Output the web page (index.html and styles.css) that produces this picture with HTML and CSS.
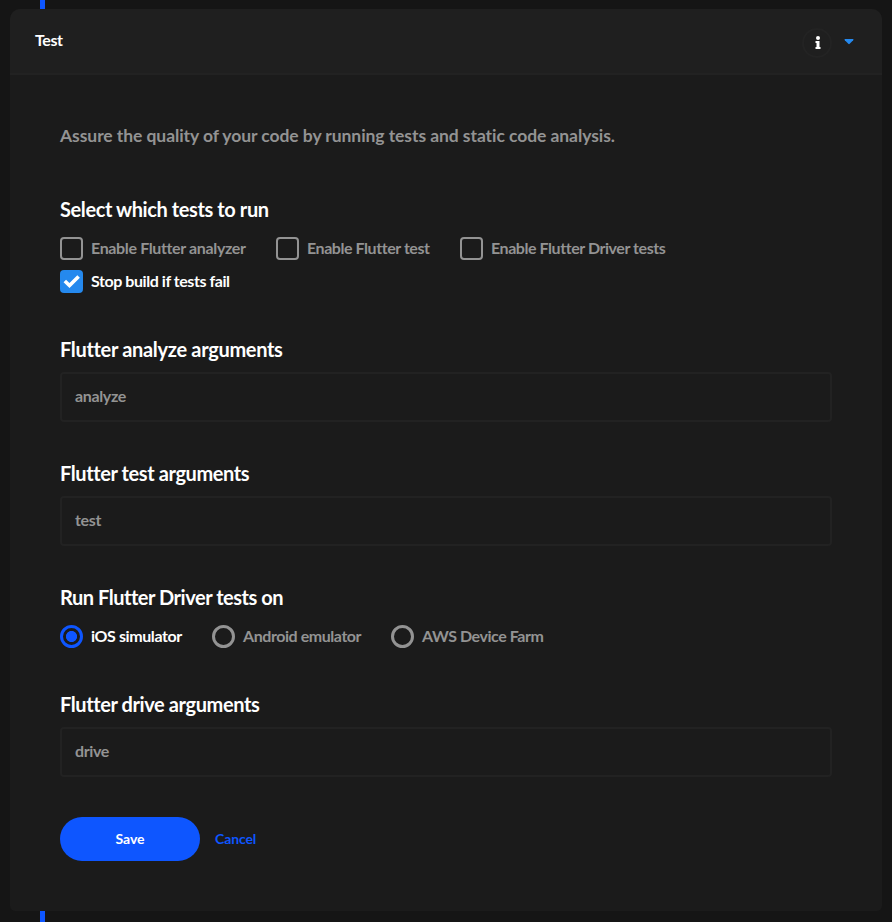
FILE: index.html
```html
<!DOCTYPE html>
<html lang="en">
<head>
<meta charset="utf-8">
<title>Test</title>
<link rel="stylesheet" href="styles.css">
</head>
<body>
<div class="connector top"></div>
<section class="card">
  <header class="card-header">
    <h1>Test</h1>
    <div class="info"><svg width="6" height="13" viewBox="0 0 6 13" fill="#fff"><circle cx="3" cy="2" r="2"/><path d="M.5 5H4.5V11H5.5V13H.5V11H1.5V7H.5Z"/></svg></div>
    <svg class="caret" width="10" height="6" viewBox="0 0 10 6"><path d="M1 0H9Q10 .3 9.2 1.2L5.7 4.8Q5 5.5 4.3 4.8L.8 1.2Q0 .3 1 0Z" fill="#2589ee"/></svg>
  </header>
  <form class="card-body">
    <p class="description">Assure the quality of your code by running tests and static code analysis.</p>
    <h2>Select which tests to run</h2>
    <div class="options">
      <label class="option w-analyzer"><span class="box"></span><span class="text">Enable Flutter analyzer</span></label>
      <label class="option w-test"><span class="box"></span><span class="text">Enable Flutter test</span></label>
      <label class="option w-driver"><span class="box"></span><span class="text">Enable Flutter Driver tests</span></label>
      <label class="option selected w-stop"><span class="box checked"><svg width="23" height="23" viewBox="0 0 23 23" fill="none" stroke="#fff" stroke-width="3.6"><path d="M4.8 11L9.5 15.5L18.6 6.5"/></svg></span><span class="text">Stop build if tests fail</span></label>
    </div>
    <h2 class="t-analyze">Flutter analyze arguments</h2>
    <div class="field">analyze</div>
    <h2>Flutter test arguments</h2>
    <div class="field">test</div>
    <h2 class="t-run">Run Flutter Driver tests on</h2>
    <div class="options">
      <label class="option selected w-ios"><span class="radio on"></span><span class="text">iOS simulator</span></label>
      <label class="option w-android"><span class="radio"></span><span class="text">Android emulator</span></label>
      <label class="option w-aws"><span class="radio"></span><span class="text">AWS Device Farm</span></label>
    </div>
    <h2>Flutter drive arguments</h2>
    <div class="field">drive</div>
    <div class="actions"><button type="button" class="save">Save</button><a class="cancel">Cancel</a></div>
  </form>
</section>
<div class="connector bottom"></div>
</body>
</html>
```
FILE: styles.css
```css
* { box-sizing: border-box; }
body { margin: 0; height: 922px; overflow: hidden; background: #151515; color: #fff; font-family: Lato, "Liberation Sans", sans-serif; font-weight: 700; }
h1, h2, p { margin: 0; white-space: nowrap; }
.connector { width: 5px; margin-left: 40px; background: #0e56ff; }
.top { height: 9px; }
.bottom { height: 11px; }
.card { width: 872px; height: 902px; margin-left: 10px; border-radius: 10px 10px 5px 5px; background: #1b1b1b; overflow: hidden; }
.card-header { display: flex; align-items: center; height: 66px; padding: 0 28px 0 25px; background: #1f1f1f; border-bottom: 2px solid #222; }
h1 { flex: 1; padding-bottom: 2px; font-size: 16px; line-height: 20px; letter-spacing: -.4px; }
.info { display: flex; align-items: center; justify-content: center; width: 30px; height: 30px; margin: 3px 12px 0 0; border: 2px solid #232323; border-radius: 50%; }
.info svg { position: relative; left: .5px; }
.caret { margin-top: 1px; }
.card-body { padding: 49px 50px 0; }
.description { margin-bottom: 50px; font-size: 17.5px; line-height: 24px; letter-spacing: -.07px; color: #939393; }
h2 { margin-bottom: 12px; font-size: 20px; line-height: 22px; font-weight: 700; letter-spacing: -.4px; }
.t-analyze { letter-spacing: -.32px; }
.t-run { letter-spacing: -.47px; }
.options { display: flex; flex-wrap: wrap; gap: 10px 30px; margin: 17px 0 45px; }
.option { display: flex; gap: 8px; height: 23px; color: #939393; font-size: 16px; line-height: 21px; white-space: nowrap; letter-spacing: -.44px; }
.selected { color: #fff; }
.box, .radio { flex: none; width: 23px; height: 23px; border: 2px solid #939393; }
.box { border-radius: 4px; }
.checked { border: 0; background: #2589ee; }
.checked svg { display: block; }
.radio { border-width: 3px; border-radius: 50%; }
.on { border-color: #0e56ff; background: radial-gradient(circle, #0e56ff 5.2px, transparent 5.9px); }
.w-analyzer { width: 186px; letter-spacing: -.36px; }
.w-test { width: 154px; }
.w-driver { width: 206px; }
.w-stop { width: 171px; }
.w-ios { width: 122px; letter-spacing: -.4px; }
.w-android { width: 149px; }
.w-aws { width: 153px; }
.field { height: 50px; margin-bottom: 40px; padding: 0 13px; border: 2px solid #222; border-radius: 4px; font-size: 16px; line-height: 44px; letter-spacing: -.36px; color: #939393; }
.actions { display: flex; align-items: center; gap: 15px; height: 44px; }
.save { width: 140px; height: 44px; padding: 0 0 2px; border: 0; border-radius: 22px; background: #0e56ff; color: #fff; font: inherit; font-size: 14px; letter-spacing: -.1px; }
.cancel { padding-bottom: 2px; color: #0e56ff; font-size: 14px; letter-spacing: -.1px; }
```
